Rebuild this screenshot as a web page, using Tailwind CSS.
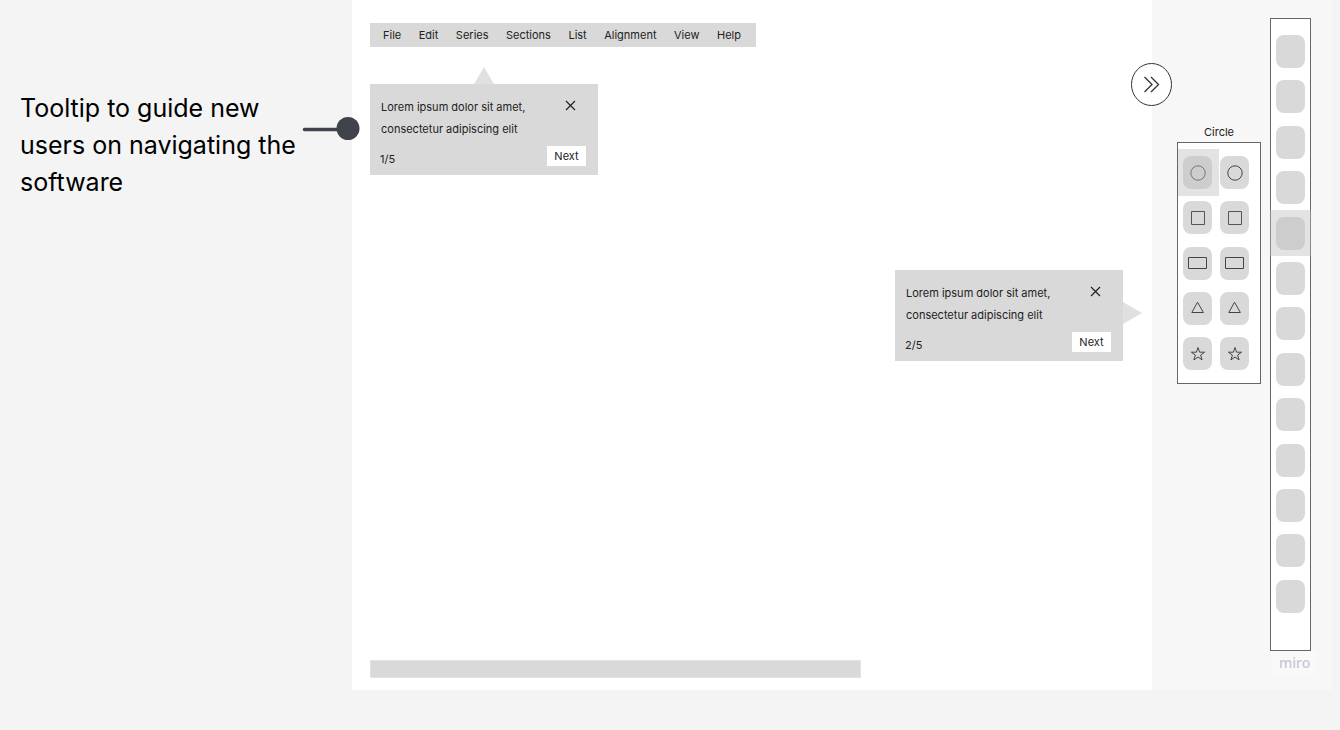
<!DOCTYPE html>
<html lang="en">

<head>
  <meta charset="UTF-8">
  <meta name="viewport" content="width=device-width, initial-scale=1.0">
  <title>Onboarding tooltips wireframe</title>
  <script src="https://cdn.jsdelivr.net/npm/@tailwindcss/browser@4"></script>
</head>

<body class="flex min-h-screen bg-[#f4f4f4] pb-10 pr-2 font-['Inter',sans-serif] text-[#222222]">
  <!-- Annotation -->
  <aside class="relative w-[352px] shrink-0 pt-[90px] pl-5">
    <p class="w-[284px] text-[25px] leading-[37px] text-black">Tooltip to guide new users on navigating the software</p>
    <svg class="absolute top-[117px] left-[302px] z-10" width="58" height="24" viewBox="0 0 58 24">
      <path d="M2.5 12.5H40" stroke="#40434b" stroke-width="3.5" stroke-linecap="round" />
      <circle cx="46" cy="11.5" r="11.5" fill="#40434b" />
    </svg>
  </aside>

  <!-- Canvas -->
  <main class="flex flex-1 flex-col bg-white px-[18px] pt-[23px] pb-3">
    <nav class="flex h-6 w-[386px] items-center justify-between bg-[#d9d9d9] pr-[15px] pl-[13px] text-[11px]">
      <a href="#">File</a>
      <a href="#">Edit</a>
      <a href="#">Series</a>
      <a href="#">Sections</a>
      <a href="#">List</a>
      <a href="#">Alignment</a>
      <a href="#">View</a>
      <a href="#">Help</a>
    </nav>

    <section class="relative mt-[37px] flex h-[91px] w-[228px] flex-col justify-between bg-[#d9d9d9] pt-3 pr-3 pb-[9px] pl-[10px] text-[11px]">
      <svg class="absolute -top-[17px] left-[104px]" width="20" height="17" viewBox="0 0 20 17"><path d="M10 0L20 17H0z" fill="#e0e0e0" /></svg>
      <div class="flex items-start justify-between pr-[10px] pl-px">
        <p class="w-[160px] leading-[22px]">Lorem ipsum dolor sit amet, consectetur adipiscing elit</p>
        <button aria-label="Close" class="mt-1"><svg width="11" height="11" viewBox="0 0 11 11" fill="none" stroke="#222222" stroke-width="1.2"><path d="M1 1l9 9M10 1l-9 9" /></svg></button>
      </div>
      <div class="flex items-end justify-between">
        <span class="leading-[14px]">1/5</span>
        <button class="h-5 w-[39px] bg-white">Next</button>
      </div>
    </section>

    <section class="relative mt-[95px] mr-[11px] flex h-[91px] w-[228px] flex-col justify-between self-end bg-[#d9d9d9] pt-3 pr-3 pb-[9px] pl-[10px] text-[11px]">
      <svg class="absolute top-8 left-[228px]" width="19" height="22" viewBox="0 0 19 22"><path d="M0 0L19 11L0 22z" fill="#e0e0e0" /></svg>
      <div class="flex items-start justify-between pr-[10px] pl-px">
        <p class="w-[160px] leading-[22px]">Lorem ipsum dolor sit amet, consectetur adipiscing elit</p>
        <button aria-label="Close" class="mt-1"><svg width="11" height="11" viewBox="0 0 11 11" fill="none" stroke="#222222" stroke-width="1.2"><path d="M1 1l9 9M10 1l-9 9" /></svg></button>
      </div>
      <div class="flex items-end justify-between">
        <span class="leading-[14px]">2/5</span>
        <button class="h-5 w-[39px] bg-white">Next</button>
      </div>
    </section>

    <div class="mt-auto h-[18px] w-[491px] border border-[#e3e3e3] bg-[#d9d9d9]"></div>
  </main>

  <!-- Side panel -->
  <aside class="relative flex w-[180px] shrink-0 items-start gap-[9px] bg-[#f7f7f7] pl-[25px]">
    <button aria-label="Collapse panel" class="absolute top-[63px] -left-[21px]">
      <svg width="41" height="43" viewBox="0 0 41 43" fill="none" stroke="#333333">
        <ellipse cx="20.5" cy="21.5" rx="20" ry="21" fill="#ffffff" stroke-width="1" />
        <path d="M13.5 14L21 21.5L13.5 29M20 14L27.5 21.5L20 29" stroke-width="1.3" />
      </svg>
    </button>

    <section class="w-[84px] pt-[124px]">
      <h2 class="text-center text-[11px] leading-4">Circle</h2>
      <div class="mt-[2px] grid h-[242px] grid-cols-[29px_29px] content-between gap-x-2 border border-[#666666] bg-white pt-[13px] pb-[13px] pl-[5px]">
        <button aria-label="Circle, selected" class="relative flex h-[33px] items-center justify-center rounded-lg bg-[#d9d9d9]">
          <svg width="18" height="18" viewBox="0 0 18 18" fill="none" stroke="#444444"><circle cx="9" cy="9" r="7.2" /></svg>
          <span class="absolute -top-[7px] -left-[5px] h-[47px] w-[41px] bg-[#bcbcbc]/42"></span>
        </button>
        <button aria-label="Circle" class="flex h-[33px] items-center justify-center rounded-lg bg-[#d9d9d9]">
          <svg width="18" height="18" viewBox="0 0 18 18" fill="none" stroke="#444444"><circle cx="9" cy="9" r="7.2" /></svg>
        </button>
        <button aria-label="Square" class="flex h-[33px] items-center justify-center rounded-lg bg-[#d9d9d9]">
          <svg width="18" height="18" viewBox="0 0 18 18" fill="none" stroke="#555555"><path d="M2.5 2.5h13v13h-13z" /></svg>
        </button>
        <button aria-label="Square" class="flex h-[33px] items-center justify-center rounded-lg bg-[#d9d9d9]">
          <svg width="18" height="18" viewBox="0 0 18 18" fill="none" stroke="#555555"><path d="M2.5 2.5h13v13h-13z" /></svg>
        </button>
        <button aria-label="Rectangle" class="flex h-[33px] items-center justify-center rounded-lg bg-[#d9d9d9]">
          <svg width="19" height="14" viewBox="0 0 19 14" fill="none" stroke="#444444"><path d="M.5 1.5h18v11h-18z" /></svg>
        </button>
        <button aria-label="Rectangle" class="flex h-[33px] items-center justify-center rounded-lg bg-[#d9d9d9]">
          <svg width="19" height="14" viewBox="0 0 19 14" fill="none" stroke="#444444"><path d="M.5 1.5h18v11h-18z" /></svg>
        </button>
        <button aria-label="Triangle" class="flex h-[33px] items-center justify-center rounded-lg bg-[#d9d9d9]">
          <svg width="14" height="14" viewBox="0 0 14 14" fill="none" stroke="#444444"><path d="M6.5 1.2L12.4 11.5H.8z" /></svg>
        </button>
        <button aria-label="Triangle" class="flex h-[33px] items-center justify-center rounded-lg bg-[#d9d9d9]">
          <svg width="14" height="14" viewBox="0 0 14 14" fill="none" stroke="#444444"><path d="M6.5 1.2L12.4 11.5H.8z" /></svg>
        </button>
        <button aria-label="Star" class="flex h-[33px] items-center justify-center rounded-lg bg-[#d9d9d9]">
          <svg width="16" height="16" viewBox="0 0 16 16" fill="none" stroke="#444444"><path d="M8 1.5L9.6 6.2H14.6L10.6 9.1L12.1 13.9L8 11L3.9 13.9L5.4 9.1L1.4 6.2H6.4z" /></svg>
        </button>
        <button aria-label="Star" class="flex h-[33px] items-center justify-center rounded-lg bg-[#d9d9d9]">
          <svg width="16" height="16" viewBox="0 0 16 16" fill="none" stroke="#444444"><path d="M8 1.5L9.6 6.2H14.6L10.6 9.1L12.1 13.9L8 11L3.9 13.9L5.4 9.1L1.4 6.2H6.4z" /></svg>
        </button>
      </div>
    </section>

    <section class="flex w-[41px] flex-col pt-[18px]">
      <div class="flex h-[633px] flex-col justify-between border border-[#666666] bg-white px-[5px] pt-4 pb-[37px]">
        <button aria-label="Tool 1" class="h-[33px] rounded-lg bg-[#d9d9d9]"></button>
        <button aria-label="Tool 2" class="h-[33px] rounded-lg bg-[#d9d9d9]"></button>
        <button aria-label="Tool 3" class="h-[33px] rounded-lg bg-[#d9d9d9]"></button>
        <button aria-label="Tool 4" class="h-[33px] rounded-lg bg-[#d9d9d9]"></button>
        <button aria-label="Tool 5, selected" class="relative h-[33px] rounded-lg bg-[#d9d9d9]">
          <span class="absolute -top-[7px] -left-[6px] h-[46px] w-[41px] bg-[#bcbcbc]/42"></span>
        </button>
        <button aria-label="Tool 6" class="h-[33px] rounded-lg bg-[#d9d9d9]"></button>
        <button aria-label="Tool 7" class="h-[33px] rounded-lg bg-[#d9d9d9]"></button>
        <button aria-label="Tool 8" class="h-[33px] rounded-lg bg-[#d9d9d9]"></button>
        <button aria-label="Tool 9" class="h-[33px] rounded-lg bg-[#d9d9d9]"></button>
        <button aria-label="Tool 10" class="h-[33px] rounded-lg bg-[#d9d9d9]"></button>
        <button aria-label="Tool 11" class="h-[33px] rounded-lg bg-[#d9d9d9]"></button>
        <button aria-label="Tool 12" class="h-[33px] rounded-lg bg-[#d9d9d9]"></button>
        <button aria-label="Tool 13" class="h-[33px] rounded-lg bg-[#d9d9d9]"></button>
      </div>
      <span class="ml-[2px] w-[45px] bg-[#f9f9f9] pl-[7px] font-['Noto_Sans',sans-serif] text-sm leading-[23px] font-medium text-[#c8c6d4]">miro</span>
    </section>
  </aside>
</body>

</html>
